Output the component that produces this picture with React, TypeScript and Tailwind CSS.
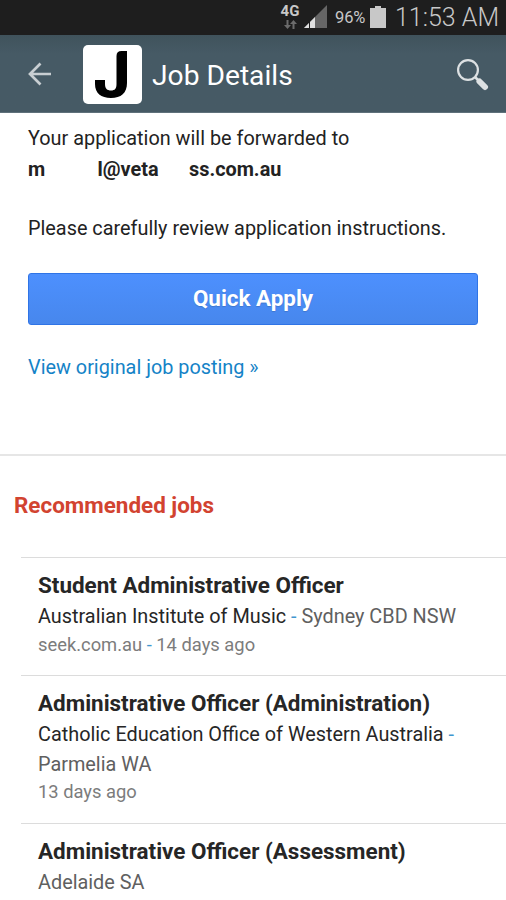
import { Fragment } from "react";

type Job = { title: string; company?: string; location: string; meta: string[] };

const jobs: Job[] = [
  {
    title: "Student Administrative Officer",
    company: "Australian Institute of Music",
    location: "Sydney CBD NSW",
    meta: ["seek.com.au", "14 days ago"],
  },
  {
    title: "Administrative Officer (Administration)",
    company: "Catholic Education Office of Western Australia",
    location: "Parmelia WA",
    meta: ["13 days ago"],
  },
  { title: "Administrative Officer (Assessment)", location: "Adelaide SA", meta: [] },
];

function Dash() {
  return <span className="text-[#3f97cf]"> - </span>;
}

function StatusBar() {
  return (
    <div className="flex h-[35px] shrink-0 items-center justify-end bg-[#1e1e1e] pr-[8px] text-[#c8c8c8]">
      <div className="flex w-[20px] flex-col items-center pb-[2px]">
        <span className="text-[15px] leading-[15px] font-bold">4G</span>
        <svg width="13" height="11" viewBox="0 0 13 11" fill="#6c6c6c">
          <path d="M2.5 1h2v5H7L3.5 10 0 6h2.5zM8.5 10h2V5H13L9.5 1 6 5h2.500z" />
        </svg>
      </div>
      <svg className="mb-[1px] ml-[3px]" width="24" height="24" viewBox="0 0 24 24">
        <path d="M1 23 24 0v23z" fill="#666" />
        <path d="M1 23 12 12v11z" fill="#e0e0e0" />
        <path d="M6.500 15v8" stroke="#1e1e1e" />
      </svg>
      <span className="mt-[2px] ml-[8px] w-[31px] text-[16.500px] tracking-[-0.1px] whitespace-nowrap">96%</span>
      <svg className="mb-[2px] ml-[4px]" width="16" height="24" viewBox="0 0 16 24" fill="#c8c8c8">
        <path d="M5 1h6v2h5v20H0V3h5z" />
      </svg>
      <span className="ml-[9px] w-[103px] text-[25px] leading-[35px] font-light whitespace-nowrap">11:53 AM</span>
    </div>
  );
}

function Header() {
  return (
    <header className="flex h-[78px] shrink-0 items-center border-b border-[#5f717b] bg-linear-to-b from-[#40535c] to-[#465a65] to-25% pt-[1px] pr-[17px] pl-[28px]">
      <svg width="24" height="24" viewBox="0 0 24 24" fill="none" stroke="#c8ced2" strokeWidth="2.7">
        <path d="M23 12H2M12.500 1.500 2 12l10.500 10.500" />
      </svg>
      <div className="ml-[31px] h-[59px] w-[59px] rounded-[5px] bg-white">
        <svg width="59" height="59" viewBox="0 0 59 59">
          <path
            d="M33.5 11q0-5 5-5H44v32c0 10-6 15-16 15S12 48 12 39v-4h10v4c0 4.500 2 6.500 6 6.500s5.500-2 5.500-6.500z"
            fill="#000"
          />
        </svg>
      </div>
      <h1 className="mt-[3px] ml-[10px] flex-1 text-[28.200px] leading-[36px] text-white">Job Details</h1>
      <svg width="33" height="33" viewBox="0 0 33 33" fill="none" stroke="#dde1e3">
        <circle cx="12" cy="12" r="9.900" strokeWidth="2.2" />
        <path d="m19 19 4 4" strokeWidth="2.5" />
        <path d="m23.500 23.500 5.500 5.500" strokeWidth="6" strokeLinecap="round" />
      </svg>
    </header>
  );
}

export default function App() {
  return (
    <div className="flex h-[900px] w-[506px] flex-col overflow-hidden bg-white font-[Roboto,sans-serif]">
      <StatusBar />
      <Header />
      <section className="h-[341px] shrink-0 px-[28px] pt-[11px] text-[19.850px] leading-[30px] text-[#222]">
        <p>Your application will be forwarded to</p>
        <p className="mt-[1px] flex font-bold">
          <span className="w-[69.500px]">m</span>
          <span className="w-[91.500px]">l@veta</span>
          <span>ss.com.au</span>
        </p>
        <p className="mt-[29px]">Please carefully review application instructions.</p>
        <button className="mt-[29px] block h-[52px] w-[450px] rounded-[3px] border border-[#2f74e6] bg-linear-to-b from-[#4d90fe] to-[#4787ed] pb-[2px] text-[22.400px] font-bold text-white [text-shadow:0_1px_1px_rgba(0,0,0,0.15)]">
          Quick Apply
        </button>
        <a className="mt-[28px] block text-[#1583c7]">View original job posting »</a>
      </section>
      <section className="border-t-2 border-[#e6e6e6]">
        <h2 className="mt-[34px] ml-[14px] text-[22.450px] leading-[30px] font-bold text-[#d24330]">Recommended jobs</h2>
        <ul className="mt-[37px] ml-[21px]">
          {jobs.map((job) => (
            <li key={job.title} className="border-t border-[#dcdcdc] pt-[12px] pb-[17px] pl-[17px]">
              <h3 className="text-[22.450px] leading-[30px] font-bold text-[#262626]">{job.title}</h3>
              <p className="pt-[2px] text-[19.850px] leading-[29.500px] text-[#606060]">
                {job.company && (
                  <>
                    <span className="text-[#262626]">{job.company}</span>
                    <Dash />
                  </>
                )}
                {job.location}
              </p>
              <p className="text-[18.350px] leading-[26.500px] text-[#7c7c7c]">
                {job.meta.map((part, i) => (
                  <Fragment key={part}>
                    {i > 0 && <Dash />}
                    {part}
                  </Fragment>
                ))}
              </p>
            </li>
          ))}
        </ul>
      </section>
    </div>
  );
}
